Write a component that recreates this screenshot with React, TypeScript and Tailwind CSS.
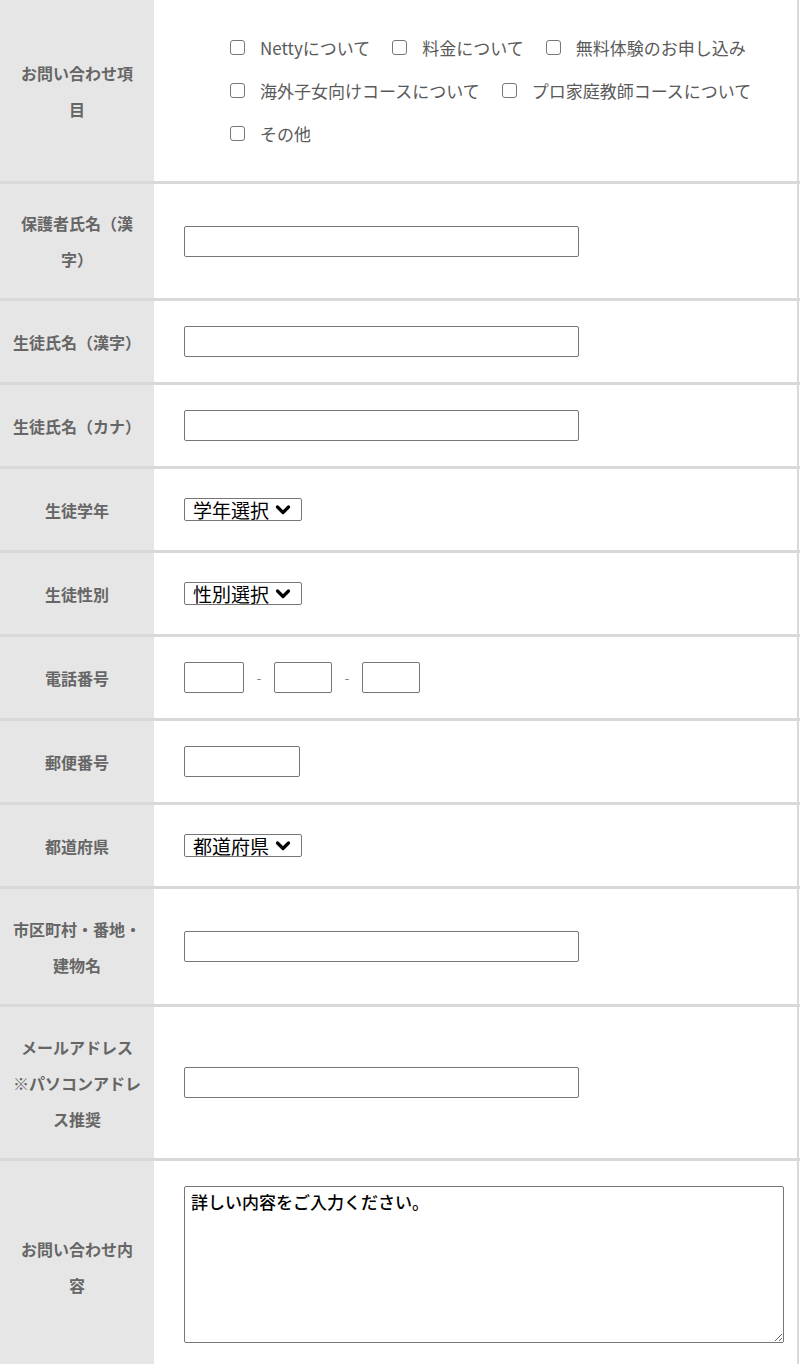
import React from "react";

const jp = { fontFamily: '"Noto Sans CJK JP", "Noto Sans", sans-serif' };

function Chevron() {
  return (
    <svg width="16" height="12" viewBox="0 0 16 12" className="shrink-0">
      <path d="M2.5 3 L8 8.5 L13.5 3" fill="none" stroke="#000" strokeWidth="3.2" strokeLinecap="round" strokeLinejoin="round" />
    </svg>
  );
}

function Row({
  label,
  h,
  children,
  contentClass = "items-center",
}: {
  label: string[];
  h: string;
  children: React.ReactNode;
  contentClass?: string;
}) {
  return (
    <div className={`flex border-b-[3px] border-[#d9d9d9] ${h}`}>
      <div className="w-[154px] shrink-0 bg-[#e6e6e6] flex flex-col items-center justify-center text-center text-[16px] leading-[36px] font-bold text-[#666] whitespace-nowrap">
        {label.map((l) => (
          <span key={l}>{l}</span>
        ))}
      </div>
      <div className={`flex-1 ml-px border-r-2 border-[#d9d9d9] mr-px flex pl-[29px] ${contentClass}`}>
        {children}
      </div>
    </div>
  );
}

function TextInput({ w = "w-[395px]" }: { w?: string }) {
  return (
    <input
      type="text"
      className={`${w} h-[31px] border border-[#767676] rounded-[2px] bg-white outline-none px-1 text-[16px]`}
    />
  );
}

function SelectBox({ text }: { text: string }) {
  return (
    <div className="w-[118px] h-[23px] border border-[#767676] rounded-[2px] bg-white flex items-center gap-[6px] pl-[8px] text-[19px] leading-none text-black">
      <span>{text}</span>
      <Chevron />
    </div>
  );
}

const checkLines = [
  ["Nettyについて", "料金について", "無料体験のお申し込み"],
  ["海外子女向けコースについて", "プロ家庭教師コースについて"],
  ["その他"],
];

export default function App() {
  return (
    <div className="w-[800px] bg-white overflow-hidden" style={jp}>
      <Row label={["お問い合わせ項", "目"]} h="h-[184px]">
        <div className="flex flex-col pl-[46px]">
          {checkLines.map((line, i) => (
            <div key={i} className="h-[43px] flex items-center gap-[22px]">
              {line.map((item) => (
                <label key={item} className="flex items-center gap-[15px] text-[17px] text-[#5a5a5a]">
                  <input
                    type="checkbox"
                    className="appearance-none w-[15px] h-[15px] border border-[#777] rounded-[3px] bg-white"
                  />
                  <span>{item}</span>
                </label>
              ))}
            </div>
          ))}
        </div>
      </Row>

      <Row label={["保護者氏名（漢", "字）"]} h="h-[117px]">
        <TextInput />
      </Row>

      <Row label={["生徒氏名（漢字）"]} h="h-[84px]">
        <TextInput />
      </Row>

      <Row label={["生徒氏名（カナ）"]} h="h-[84px]">
        <TextInput />
      </Row>

      <Row label={["生徒学年"]} h="h-[84px]">
        <SelectBox text="学年選択" />
      </Row>

      <Row label={["生徒性別"]} h="h-[84px]">
        <SelectBox text="性別選択" />
      </Row>

      <Row label={["電話番号"]} h="h-[84px]">
        <div className="flex items-center">
          <TextInput w="w-[60px]" />
          <span className="w-[30px] text-center text-[14px] text-[#888]">-</span>
          <TextInput w="w-[58px]" />
          <span className="w-[30px] text-center text-[14px] text-[#888]">-</span>
          <TextInput w="w-[58px]" />
        </div>
      </Row>

      <Row label={["郵便番号"]} h="h-[84px]">
        <TextInput w="w-[116px]" />
      </Row>

      <Row label={["都道府県"]} h="h-[84px]">
        <SelectBox text="都道府県" />
      </Row>

      <Row label={["市区町村・番地・", "建物名"]} h="h-[118px]">
        <TextInput />
      </Row>

      <Row label={["メールアドレス", "※パソコンアドレ", "ス推奨"]} h="h-[154px]">
        <TextInput />
      </Row>

      <Row label={["お問い合わせ内", "容"]} h="h-[214px]" contentClass="items-start pt-[25px]">
        <textarea
          defaultValue="詳しい内容をご入力ください。"
          className="w-[600px] h-[157px] border border-[#767676] rounded-[2px] bg-white outline-none px-[6px] pt-[4px] text-[17px] leading-[22px] font-medium text-black"
        />
      </Row>
    </div>
  );
}
